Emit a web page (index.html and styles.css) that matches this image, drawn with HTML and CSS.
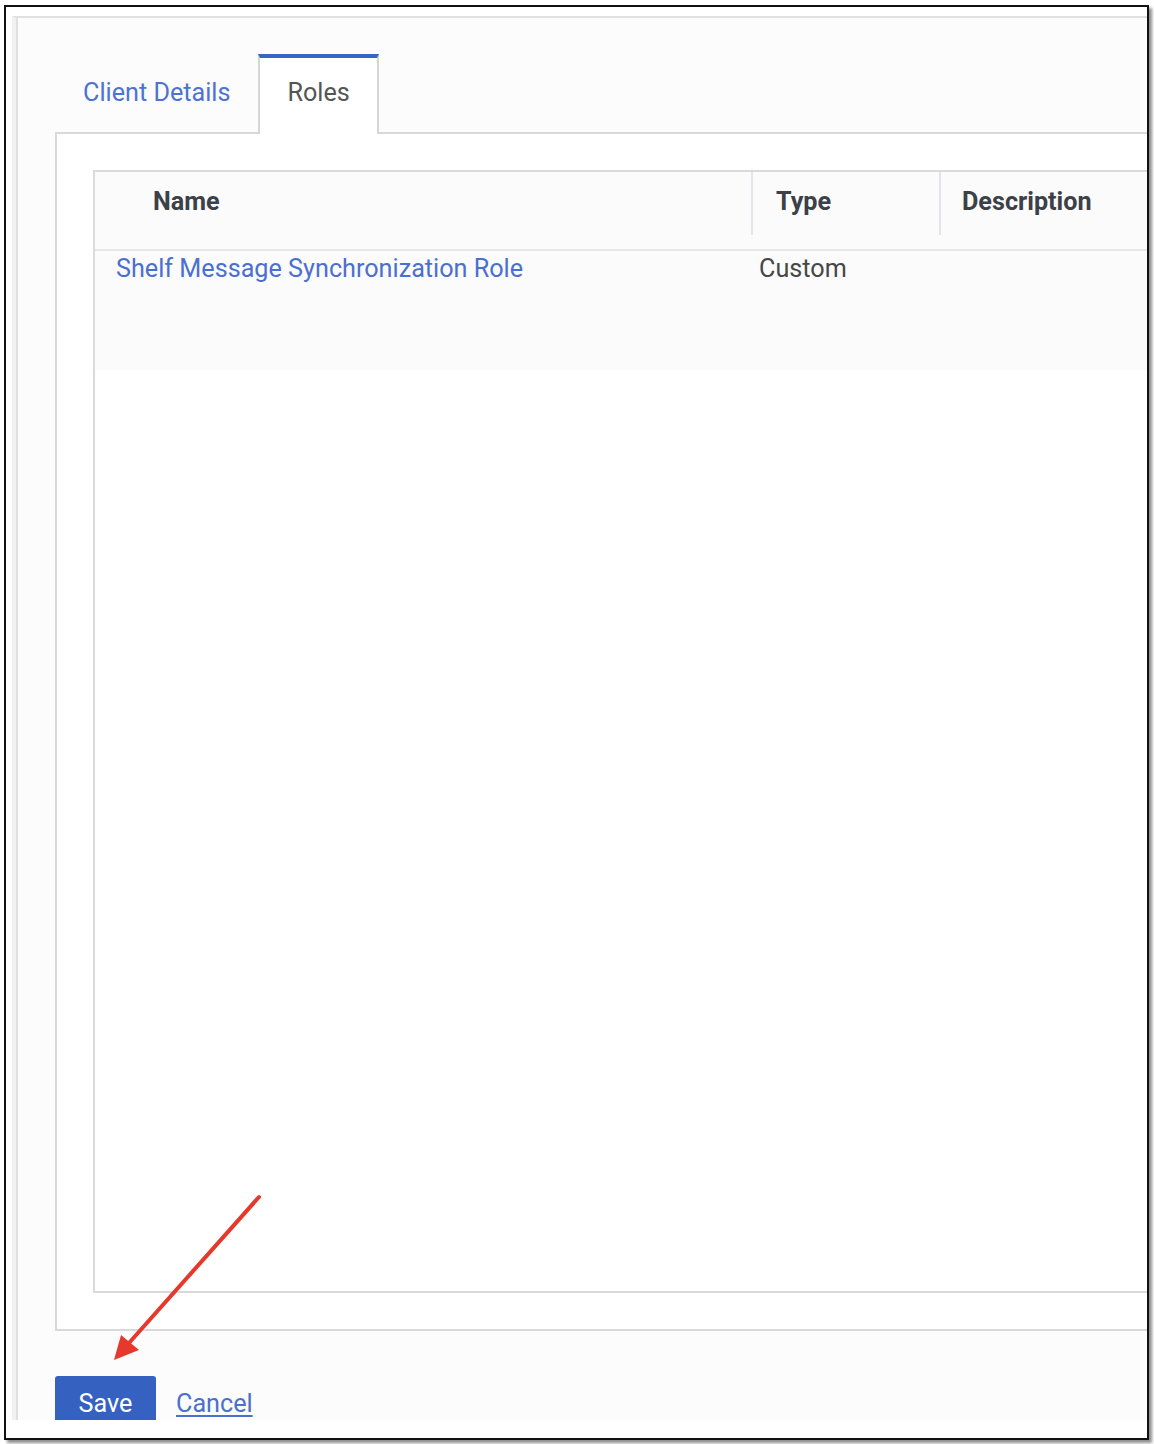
FILE: index.html
```html
<!DOCTYPE html>
<html>
<head>
<meta charset="utf-8">
<link rel="stylesheet" href="styles.css">
</head>
<body>
<div class="frame">
  <div class="page">
    <div class="content">
      <div class="tabs">
        <div class="tab">Client Details</div>
        <div class="tab active">Roles</div>
      </div>
      <div class="panel">
        <div class="table">
          <div class="thead">
            <div class="th name">Name</div>
            <div class="th type">Type</div>
            <div class="th desc">Description</div>
          </div>
          <div class="row">
            <div class="cell name"><a class="link">Shelf Message Synchronization Role</a></div>
            <div class="cell type">Custom</div>
            <div class="cell desc"></div>
          </div>
        </div>
      </div>
      <div class="actions">
        <button class="btn">Save</button>
        <a class="cancel">Cancel</a>
      </div>
    </div>
  </div>
</div>
<svg class="arrow" width="180" height="190" viewBox="0 0 180 190">
  <line x1="159" y1="17" x2="29" y2="163" stroke="#e5392d" stroke-width="4" stroke-linecap="round"/>
  <polygon points="14,180 21,155 39,170" fill="#e5392d"/>
</svg>
</body>
</html>
```
FILE: styles.css
```css
html, body {
  margin: 0;
  padding: 0;
}
body {
  width: 1154px;
  height: 1444px;
  overflow: hidden;
  position: relative;
  background: #ffffff;
  font-family: Roboto, "Liberation Sans", sans-serif;
}
.frame {
  margin: 5px 0 0 4px;
  width: 1145px;
  height: 1435px;
  box-sizing: border-box;
  border: 2px solid #111111;
  box-shadow: 3px 3px 3px rgba(0, 0, 0, 0.45);
  background: #ffffff;
  overflow: hidden;
  padding: 9px 0 0 6px;
}
.page {
  border-top: 2px solid #e0e0e0;
  border-left: 4px solid #f1f1f1;
  height: 1404px;
  box-sizing: border-box;
}
.content {
  border-left: 2px solid #e0e0e0;
  background: #fcfcfc;
  height: 1402px;
  box-sizing: border-box;
  overflow: hidden;
  padding-top: 36px;
}
.tabs {
  display: flex;
  margin-left: 37px;
  margin-bottom: -2px;
  position: relative;
  z-index: 1;
}
.tab {
  font-size: 25.2px;
  line-height: 28px;
  padding: 21px 26px 27px;
  border: 2px solid transparent;
  border-top-width: 4px;
  border-bottom: 0;
  color: #4e72d2;
}
.tab.active {
  padding-left: 27px;
  padding-right: 27px;
  background: #ffffff;
  border-color: #d6d6d6;
  border-top-color: #3a63c6;
  color: #555555;
}
.panel {
  margin-left: 37px;
  width: 1200px;
  border: 2px solid #d9d9d9;
  background: #ffffff;
  padding: 36px;
  box-sizing: border-box;
}
.table {
  border: 2px solid #dadada;
  border-right: 0;
  height: 1123px;
  box-sizing: border-box;
  background: #ffffff;
}
.thead, .row {
  display: grid;
  grid-template-columns: 656px 188px 1fr;
  background: #fbfbfc;
}
.thead {
  border-bottom: 2px solid #e4e7eb;
  height: 77px;
  align-items: start;
}
.th {
  height: 63px;
  box-sizing: border-box;
  padding-top: 16px;
  font-size: 25.2px;
  line-height: 28px;
  font-weight: 700;
  color: #3c4047;
}
.th.name { padding-left: 58px; }
.th.type { border-left: 2px solid #e2e5ea; padding-left: 23px; }
.th.desc { border-left: 2px solid #e2e5ea; padding-left: 21px; }
.row {
  height: 119px;
}
.cell {
  padding-top: 4px;
  font-size: 25.2px;
  line-height: 28px;
  color: #474747;
}
.cell.name { padding-left: 21px; }
.cell.type { padding-left: 8px; }
.link {
  color: #4b6fd0;
  text-decoration: none;
}
.actions {
  display: flex;
  align-items: center;
  gap: 20px;
  margin: 45px 0 0 37px;
}
.btn {
  height: 56px;
  width: 101px;
  padding: 0;
  border: 0;
  border-radius: 3px;
  background: #3561c1;
  color: #ffffff;
  font-family: Roboto, "Liberation Sans", sans-serif;
  font-size: 25.2px;
  line-height: 56px;
}
.cancel {
  font-size: 25.2px;
  line-height: 28px;
  color: #4b6fd0;
  text-decoration: underline;
  text-underline-offset: 3px;
}
.arrow {
  position: absolute;
  left: 100px;
  top: 1180px;
}
```
